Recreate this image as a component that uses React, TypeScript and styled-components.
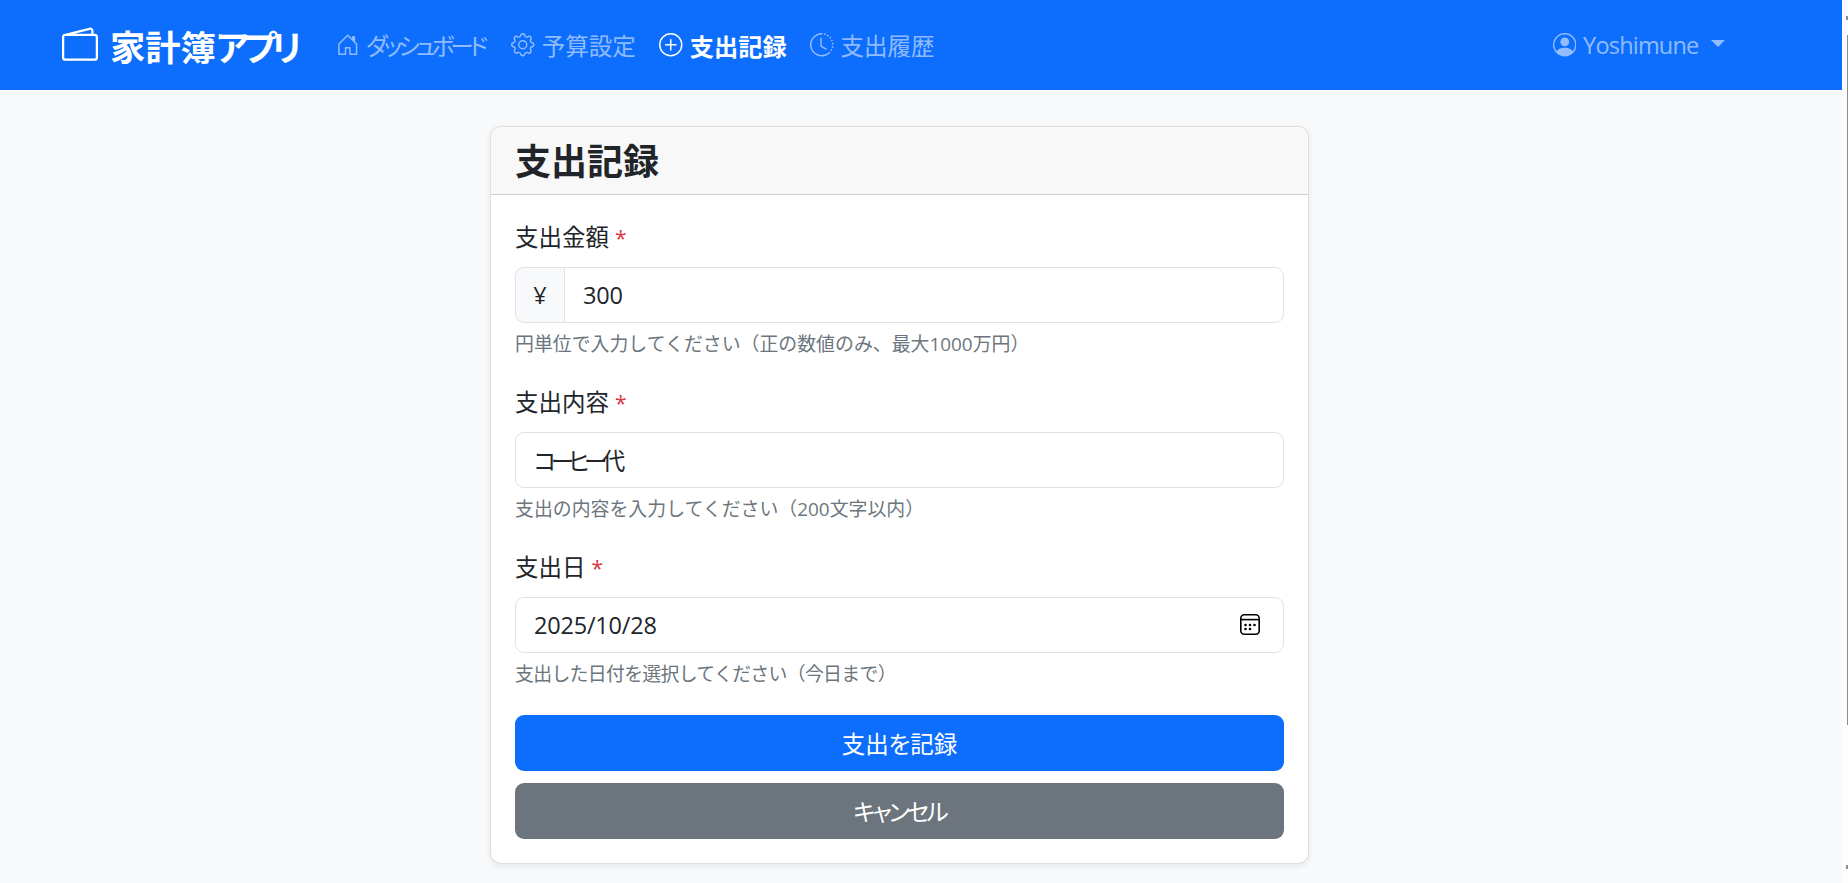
import styled, { createGlobalStyle } from "styled-components";
import { BsClockHistory, BsGear, BsHouseDoor, BsPersonCircle, BsPlusCircle, BsWallet2 } from "react-icons/bs";

const GlobalStyle = createGlobalStyle`
  html, body {
    margin: 0;
    height: 100%;
    overflow: hidden;
  }
  body {
    background-color: #f8f9fa;
    color: #212529;
    font-family: "Open Sans", "Noto Sans CJK JP", sans-serif;
  }
  * {
    box-sizing: border-box;
  }
`;

const CalendarIcon = () => (
  <svg width="20" height="21" viewBox="0 0 20 21" fill="none">
    <rect x="0.8" y="0.8" width="18.4" height="19.4" rx="3.5" stroke="#000" strokeWidth="1.6" />
    <path d="M1 5.6h18" stroke="#000" strokeWidth="1.6" />
    <g fill="#000">
      <circle cx="5.5" cy="11" r="1.3" />
      <circle cx="10" cy="11" r="1.3" />
      <circle cx="14.5" cy="11" r="1.3" />
      <circle cx="5.5" cy="15" r="1.3" />
      <circle cx="10" cy="15" r="1.3" />
    </g>
  </svg>
);

const App = () => {
  return (
    <>
      <GlobalStyle />
      <Page>
        <Main>
          <Navbar>
            <Brand href="#">
              <BsWallet2 />
              <span>
                家計簿<BrandKana>アプリ</BrandKana>
              </span>
            </Brand>
            <NavList>
              <NavLink href="#" $tight>
                <BsHouseDoor />
                ダッシュボード
              </NavLink>
              <NavLink href="#">
                <BsGear />
                予算設定
              </NavLink>
              <NavLink href="#" $active>
                <BsPlusCircle />
                支出記録
              </NavLink>
              <NavLink href="#">
                <BsClockHistory />
                支出履歴
              </NavLink>
            </NavList>
            <UserMenu href="#">
              <BsPersonCircle />
              <UserName>Yoshimune</UserName>
              <Caret />
            </UserMenu>
          </Navbar>
          <Card>
            <CardHeader>
              <CardTitle>支出記録</CardTitle>
            </CardHeader>
            <CardBody>
              <Field>
                <Label>
                  支出金額 <Required>*</Required>
                </Label>
                <InputGroup>
                  <InputAddon>¥</InputAddon>
                  <GroupInput defaultValue="300" />
                </InputGroup>
                <Help>円単位で入力してください（正の数値のみ、最大1000万円）</Help>
              </Field>
              <Field>
                <Label>
                  支出内容 <Required>*</Required>
                </Label>
                <KanaInput defaultValue="コーヒー代" />
                <Help>支出の内容を入力してください（200文字以内）</Help>
              </Field>
              <Field>
                <Label>
                  支出日 <Required>*</Required>
                </Label>
                <DateWrap>
                  <Input defaultValue="2025/10/28" />
                  <DateIcon>
                    <CalendarIcon />
                  </DateIcon>
                </DateWrap>
                <Help $tight>支出した日付を選択してください（今日まで）</Help>
              </Field>
              <Actions>
                <Button type="button" $variant="primary">
                  支出を記録
                </Button>
                <Button type="button" $variant="secondary">
                  キャンセル
                </Button>
              </Actions>
            </CardBody>
          </Card>
        </Main>
        <Scrollbar>
          <ScrollArrow />
          <ScrollThumb />
          <ScrollArrow />
        </Scrollbar>
      </Page>
    </>
  );
};

const Page = styled.div`
  display: flex;
  height: 883px;
  overflow: hidden;
`;

const Main = styled.main`
  flex: 1;
  min-width: 0;
`;

const Scrollbar = styled.aside`
  width: 6px;
  display: flex;
  flex-direction: column;
  align-items: flex-end;
  padding: 16px 0 14px;
  background-color: #fcfcfd;
`;

const ScrollArrow = styled.span`
  width: 2px;
  height: 4px;
  background-color: #8d8d8d;
`;

const ScrollThumb = styled.span`
  flex: 1;
  width: 1px;
  margin: 15px 0 140px;
  background-color: #8d8d8d;
`;

const Navbar = styled.nav`
  height: 90px;
  display: flex;
  align-items: center;
  padding: 0 117px 0 62px;
  background-color: #0d6efd;
`;

const Brand = styled.a`
  display: flex;
  align-items: center;
  gap: 12px;
  margin-right: 27px;
  color: #fff;
  font-size: 35.3px;
  font-weight: 700;
  font-feature-settings: "palt";
  text-decoration: none;

  & > svg {
    width: 36px;
    height: 36px;
  }
`;

const BrandKana = styled.span`
  letter-spacing: -5px;
`;

const NavList = styled.div`
  display: flex;
  flex: 1;
`;

const NavLink = styled.a<{ $active?: boolean; $tight?: boolean }>`
  display: flex;
  align-items: center;
  gap: 7px;
  padding: 0 ${(props) => (props.$tight ? "15.5px" : "11.76px")} 0 11.76px;
  color: ${(props) => (props.$active ? "#fff" : "rgba(255, 255, 255, 0.55)")};
  font-size: ${(props) => (props.$active ? "24.2px" : "23.5px")};
  font-weight: ${(props) => (props.$active ? 700 : 400)};
  font-feature-settings: "palt";
  letter-spacing: ${(props) => (props.$tight ? "-4px" : "0")};
  text-decoration: none;

  & > svg {
    width: 23.5px;
    height: 23.5px;
    flex-shrink: 0;
  }
`;

const UserMenu = styled(NavLink)`
  padding: 0;
`;

const UserName = styled.span`
  letter-spacing: -0.8px;
`;

const Caret = styled.span`
  width: 0;
  height: 0;
  margin-left: 5.5px;
  margin-bottom: 4px;
  border-top: 7px solid currentColor;
  border-left: 7px solid transparent;
  border-right: 7px solid transparent;
`;

const Card = styled.section`
  width: 819px;
  margin: 36px 0 0 490px;
  background-color: #fff;
  border: 1px solid rgba(0, 0, 0, 0.125);
  border-radius: 11px;
  box-shadow: 0 2px 6px rgba(0, 0, 0, 0.08);
  overflow: hidden;
`;

const CardHeader = styled.header`
  height: 68px;
  display: flex;
  align-items: center;
  padding: 3px 24px 0;
  background-color: #f8f8f8;
  border-bottom: 1px solid #cfcfcf;
`;

const CardTitle = styled.h4`
  margin: 0;
  font-size: 36px;
  font-weight: 700;
  line-height: 1.2;
`;

const CardBody = styled.div`
  padding: 25px 24px 24px;
`;

const Field = styled.div`
  margin-bottom: 27px;
`;

const Label = styled.label`
  display: block;
  margin-bottom: 12px;
  font-size: 23.5px;
  line-height: 35px;
`;

const Required = styled.span`
  color: #dc3545;
  font-size: 21px;
  line-height: 1;
`;

const InputGroup = styled.div`
  display: flex;
  height: 56px;
`;

const InputAddon = styled.span`
  width: 49px;
  display: flex;
  align-items: center;
  justify-content: center;
  font-size: 23.5px;
  background-color: #f8f9fa;
  border: 1px solid #dee2e6;
  border-right: 0;
  border-radius: 9px 0 0 9px;
`;

const Input = styled.input`
  width: 100%;
  height: 56px;
  padding: 0 18px;
  color: #212529;
  font-family: inherit;
  font-size: 23.5px;
  letter-spacing: -0.2px;
  background-color: #fff;
  border: 1px solid #dee2e6;
  border-radius: 9px;
  outline: none;
`;

const GroupInput = styled(Input)`
  flex: 1;
  width: auto;
  border-radius: 0 9px 9px 0;
`;

const KanaInput = styled(Input)`
  font-feature-settings: "palt";
  letter-spacing: -5.5px;
`;

const DateWrap = styled.div`
  position: relative;
`;

const DateIcon = styled.span`
  position: absolute;
  top: 17px;
  right: 24px;
  line-height: 0;
`;

const Help = styled.div<{ $tight?: boolean }>`
  margin-top: 7px;
  color: #6c757d;
  font-size: 18.9px;
  letter-spacing: ${(props) => (props.$tight ? "-0.7px" : "0")};
  line-height: 28px;
`;

const Actions = styled.div`
  display: flex;
  flex-direction: column;
  gap: 12px;
`;

const Button = styled.button<{ $variant: "primary" | "secondary" }>`
  height: 56px;
  color: #fff;
  font-family: inherit;
  font-size: 23.5px;
  font-feature-settings: "palt";
  letter-spacing: ${(props) => (props.$variant === "secondary" ? "-2.8px" : "0")};
  background-color: ${(props) => (props.$variant === "primary" ? "#0d6efd" : "#6c757d")};
  border: none;
  border-radius: 9px;
`;

export default App;
